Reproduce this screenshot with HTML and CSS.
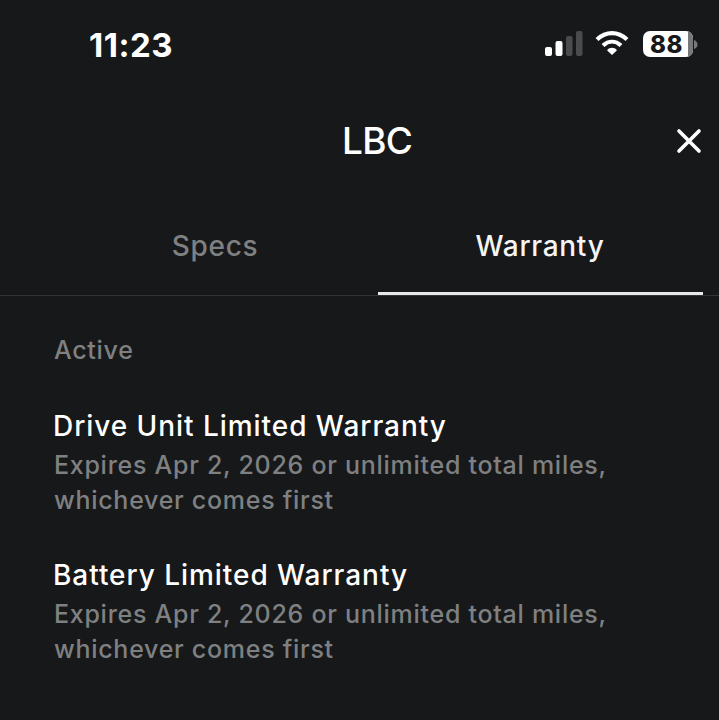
FILE: index.html
```html
<!DOCTYPE html>
<html lang="en">
<head>
<meta charset="utf-8">
<title>LBC Warranty</title>
<link rel="stylesheet" href="styles.css">
</head>
<body>
<div class="screen">
  <div class="status">
    <span class="time">11:23</span>
    <div class="status-icons">
      <svg class="signal" width="38" height="26" viewBox="0 0 38 26">
        <rect x="0" y="16" width="7" height="9" rx="2" fill="#fff"/>
        <rect x="10.500" y="10" width="7" height="15" rx="2" fill="#fff"/>
        <rect x="21" y="5" width="6.500" height="20" rx="2" fill="#4a4b4d"/>
        <rect x="31" y="0" width="6.500" height="25" rx="2" fill="#4a4b4d"/>
      </svg>
      <svg class="wifi" width="34" height="25" viewBox="0 0 34 25">
        <path d="M2 9.500C11 1 23 1 32 9.500" fill="none" stroke="#fff" stroke-width="4.200" stroke-linecap="butt"/>
        <path d="M8 15.500C13.500 10.500 20.500 10.500 26 15.500" fill="none" stroke="#fff" stroke-width="4.200"/>
        <path d="M12 20.200C15 17 19 17 22 20.200L17 25Z" fill="#fff"/>
      </svg>
      <div class="battery">
        <div class="battery-body"><span>88</span><i class="battery-rest"></i></div>
        <svg class="battery-tip" width="4" height="9" viewBox="0 0 4 9"><path d="M0 0C2.500 1 3.500 2.500 3.500 4.500S2.500 8 0 9Z" fill="#77787a"/></svg>
      </div>
    </div>
  </div>
  <header class="title-bar">
    <h1>LBC</h1>
    <svg class="close" width="26" height="26" viewBox="0 0 26 26">
      <path d="M3 3L23 23M23 3L3 23" stroke="#fff" stroke-width="3.600" stroke-linecap="round"/>
    </svg>
  </header>
  <nav class="tabs">
    <div class="tab">Specs</div>
    <div class="tab active">Warranty</div>
  </nav>
  <main class="content">
    <h2>Active</h2>
    <section class="item">
      <h3>Drive Unit Limited Warranty</h3>
      <p>Expires Apr 2, 2026 or unlimited total miles,<br>whichever comes first</p>
    </section>
    <section class="item">
      <h3>Battery Limited Warranty</h3>
      <p>Expires Apr 2, 2026 or unlimited total miles,<br>whichever comes first</p>
    </section>
  </main>
</div>
</body>
</html>
```
FILE: styles.css
```css
* { box-sizing: border-box; }
html, body { margin: 0; padding: 0; background: #17181a; }
.screen {
  width: 719px;
  height: 720px;
  overflow: hidden;
  background: #17181a;
  color: #fff;
  font-family: "Inter", "Liberation Sans", sans-serif;
}
.status {
  height: 90px;
  display: flex;
  align-items: flex-start;
  justify-content: space-between;
  padding: 28px 21px 0 89px;
}
.time {
  font-size: 33px;
  font-weight: 700;
  line-height: 34px;
  letter-spacing: 0.5px;
}
.status-icons {
  display: flex;
  align-items: flex-start;
  gap: 13px;
  margin-top: 3px;
}
.signal { margin-right: -1px; }
.wifi { margin-top: -1px; margin-right: 1px; }
.battery { display: flex; align-items: center; gap: 1px; }
.battery-body {
  width: 50px;
  height: 26px;
  border-radius: 7px;
  background: #fff;
  color: #17181a;
  display: flex;
  justify-content: center;
  align-items: center;
  position: relative;
  overflow: hidden;
  font-size: 24px;
  font-weight: 800;
  letter-spacing: 0.5px;
  padding-right: 3px;
}
.battery-rest {
  position: absolute;
  right: 0;
  top: 0;
  bottom: 0;
  width: 5px;
  background: #77787a;
}
.title-bar {
  height: 100px;
  display: flex;
  align-items: center;
  justify-content: center;
  padding: 2px 16px 0 51px;
  position: relative;
}
.title-bar h1 {
  margin: 0;
  font-size: 37px;
  font-weight: 500;
  letter-spacing: -0.8px;
  line-height: 44px;
}
.close { position: absolute; right: 17px; top: 38px; }
.tabs {
  height: 106px;
  display: grid;
  grid-template-columns: 325px 325px;
  padding-left: 53px;
  border-bottom: 1.500px solid #333436;
}
.tab {
  display: flex;
  justify-content: center;
  align-items: flex-start;
  padding-top: 38px;
  padding-right: 1px;
  font-size: 28px;
  font-weight: 500;
  line-height: 36px;
  letter-spacing: 0.7px;
  color: #7f8081;
}
.tab.active {
  color: #f4f4f4;
  border-bottom: 3px solid #e9e9e9;
}
.content { padding: 36px 54px 0; }
.content h2 {
  margin: 0 0 38px;
  font-size: 25px;
  font-weight: 500;
  line-height: 36px;
  letter-spacing: 0.7px;
  color: #7f8081;
}
.item { margin-bottom: 37px; }
.item h3 {
  margin: 0 0 1px;
  font-size: 28px;
  font-weight: 500;
  line-height: 41px;
  letter-spacing: 0.95px;
  margin-left: -1px;
  color: #fff;
}
.item p {
  margin: 0;
  font-size: 25px;
  font-weight: 500;
  line-height: 35px;
  letter-spacing: 0.72px;
  color: #7f8081;
}
```
